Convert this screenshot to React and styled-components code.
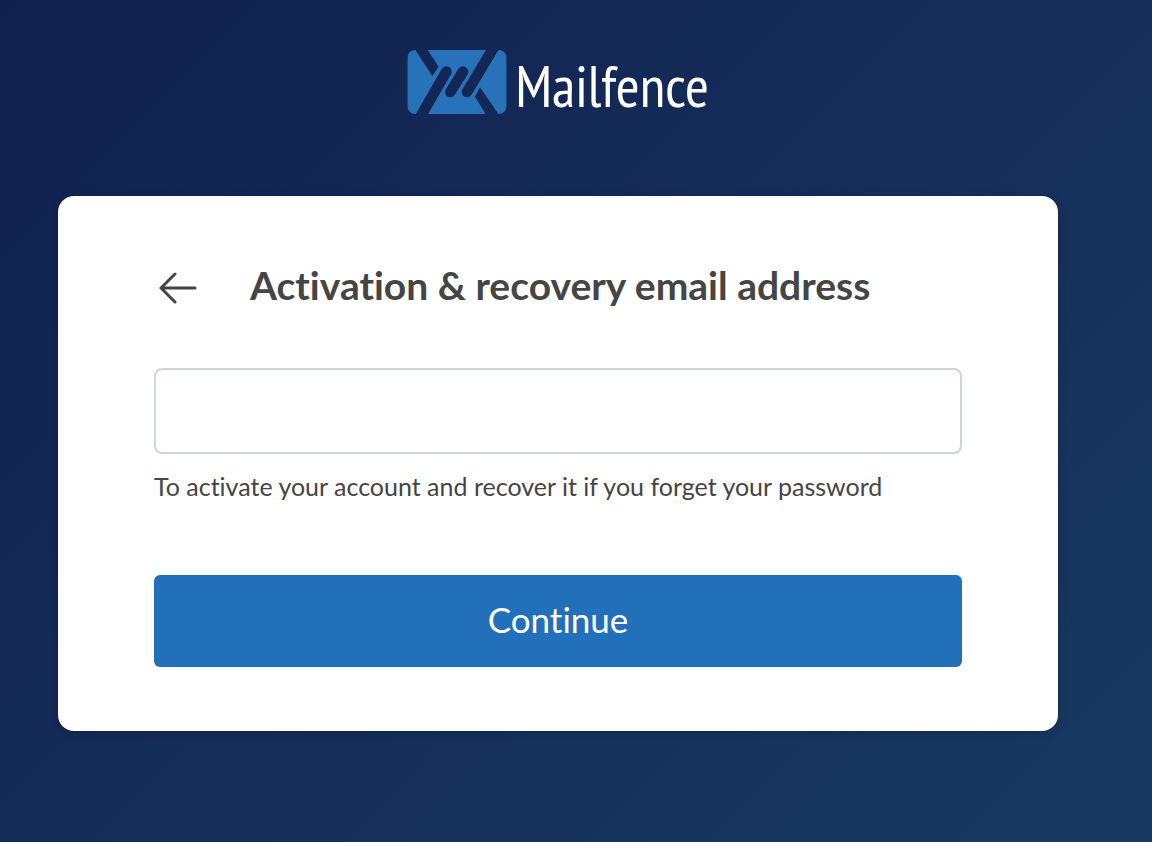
import React, {useState} from 'react'
import styled, {createGlobalStyle} from 'styled-components'

const GlobalStyle = createGlobalStyle`
  * {
    box-sizing: border-box;
  }

  body {
    margin: 0;
    font-family: Lato, sans-serif;
    font-variant-ligatures: none;
    color: #454545;
  }
`

const PageContainer = styled.div`
  min-height: 100vh;
  padding: 48px 94px 48px 58px;
  background-image: linear-gradient(135deg, #11204f 0%, #183a62 100%);
`

const LogoHeader = styled.header`
  display: flex;
  justify-content: center;
  align-items: flex-end;
  gap: 8px;
  height: 68px;
  margin-bottom: 80px;
`

const LogoMark = styled.svg`
  align-self: center;
  width: 100px;
  height: 64px;
`

const LogoName = styled.span`
  font-family: 'PT Sans Narrow', 'Open Sans', sans-serif;
  font-size: 58px;
  line-height: 60px;
  color: #ffffff;
`

const Card = styled.main`
  max-width: 1000px;
  margin: 0 auto;
  padding: 64px 96px;
  border-radius: 16px;
  background-color: #ffffff;
  box-shadow: 0 2px 8px rgba(0, 0, 0, 0.2);
`

const TitleRow = styled.div`
  display: flex;
  align-items: flex-start;
  gap: 48px;
  margin-bottom: 52px;
`

const BackButton = styled.button`
  display: flex;
  justify-content: center;
  align-items: center;
  width: 48px;
  height: 56px;
  padding: 0;
  border: none;
  background: none;
  color: #454545;
  cursor: pointer;
`

const Title = styled.h1`
  margin: 0;
  font-size: 39px;
  font-weight: 700;
  line-height: 50px;
`

const EmailInput = styled.input`
  display: block;
  width: 100%;
  height: 86px;
  padding: 0 24px;
  border: 2px solid #ced4da;
  border-radius: 8px;
  font-family: inherit;
  font-size: 35px;
  color: inherit;
  background-color: #ffffff;
`

const HelpText = styled.p`
  margin: 16px 0 72px;
  font-size: 25px;
  line-height: 33px;
`

const ContinueButton = styled.button`
  display: block;
  width: 100%;
  height: 92px;
  padding: 0 0 4px;
  border: none;
  border-radius: 6px;
  font-family: inherit;
  font-size: 35px;
  font-variant-ligatures: none;
  color: #ffffff;
  background-color: #2270b9;
  cursor: pointer;
`

const MailfenceMark = () => (
  <LogoMark viewBox="0 0 298 192" aria-hidden="true">
    <mask id="fence">
      <rect width="298" height="192" rx="24" fill="#fff" />
      <path d="M24 0H61L94 50L75 78ZM218 112L203 140L235 192H273Z" fill="#000" />
      <path
        d="M37 204L117 65M167 65L129 126M262 -12L179 126"
        stroke="#000"
        strokeWidth="32"
        strokeLinecap="round"
      />
    </mask>
    <rect width="298" height="192" fill="#2872ba" mask="url(#fence)" />
  </LogoMark>
)

const App = () => {
  const [email, setEmail] = useState('')

  const onSubmitEmail = event => {
    event.preventDefault()
  }

  return (
    <>
      <GlobalStyle />
      <PageContainer>
        <LogoHeader>
          <MailfenceMark />
          <LogoName>Mailfence</LogoName>
        </LogoHeader>
        <Card>
          <TitleRow>
            <BackButton type="button" aria-label="Back">
              <svg
                width="38"
                height="32"
                viewBox="0 0 38 32"
                fill="none"
                stroke="currentColor"
                strokeWidth="3"
                strokeLinecap="round"
                strokeLinejoin="round"
              >
                <path d="M16 2L2 16L16 30M2 16H36" />
              </svg>
            </BackButton>
            <Title id="email-title">Activation & recovery email address</Title>
          </TitleRow>
          <form onSubmit={onSubmitEmail}>
            <EmailInput
              type="email"
              aria-labelledby="email-title"
              aria-describedby="email-help"
              value={email}
              onChange={event => setEmail(event.target.value)}
            />
            <HelpText id="email-help">
              To activate your account and recover it if you forget your
              password
            </HelpText>
            <ContinueButton type="submit">Continue</ContinueButton>
          </form>
        </Card>
      </PageContainer>
    </>
  )
}

export default App
